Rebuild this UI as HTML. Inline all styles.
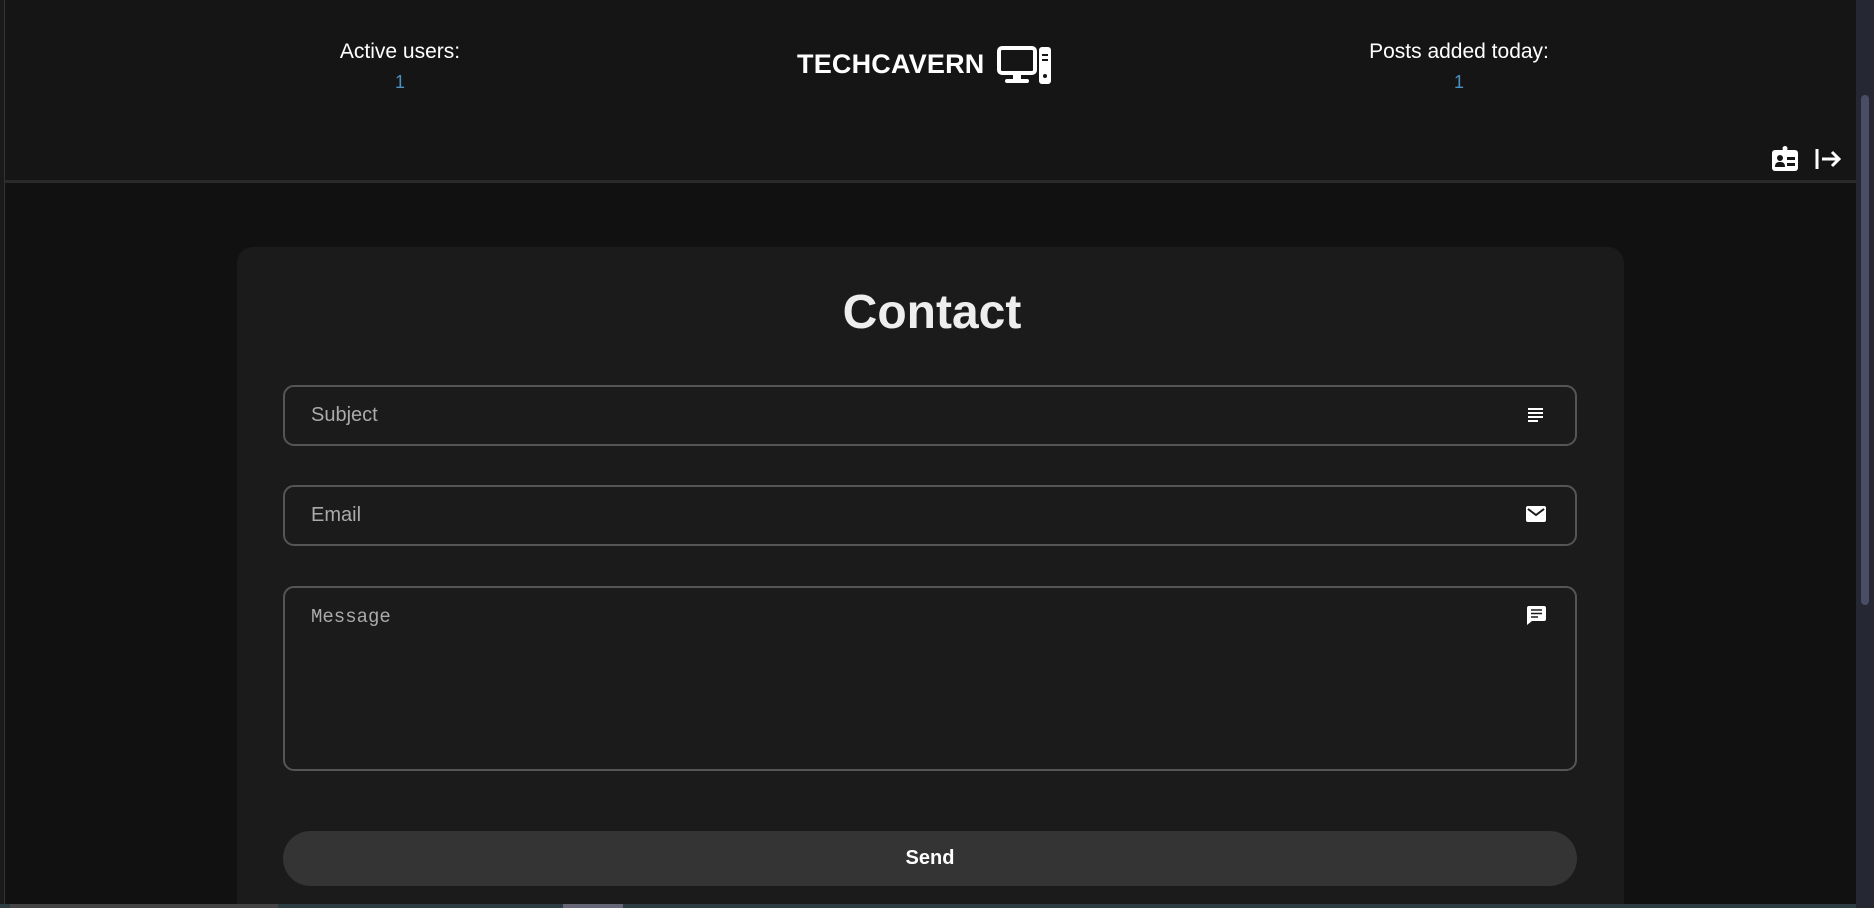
<!DOCTYPE html>
<html style="overflow:hidden;width:1874px;height:908px"><head><style>
*{margin:0;padding:0;box-sizing:border-box}
body{width:1874px;height:908px;background:#111;overflow:hidden;font-family:"Liberation Sans",sans-serif;position:relative;color:#fff}
.hdr{position:absolute;left:5px;top:0;width:1851px;height:183px;background:#151515;border-bottom:3px solid #2a2a2a}
.stat{position:absolute;top:40px;text-align:center;font-size:21px;width:300px}
.stat b{display:block;font-weight:normal;color:#4a90c0;font-size:18px;margin-top:8px}
.logo{position:absolute;left:797px;top:49px;font-size:27px;font-weight:bold;letter-spacing:0.2px}
.card{position:absolute;left:237px;top:247px;width:1387px;height:661px;background:#1b1b1b;border-radius:16px 16px 0 0}
h1{position:absolute;left:0;width:100%;top:285px;text-align:center;font-size:48px;font-weight:bold;color:#eee;padding-right:10px}
.inp{position:absolute;left:283px;width:1294px;border:2px solid #555;border-radius:11px;color:#aaa;font-size:20px;padding-left:26px}
.btn{position:absolute;left:283px;top:831px;width:1294px;height:55px;background:#343434;border-radius:28px;text-align:center;line-height:55px;font-weight:bold;font-size:20px}
.sb{position:absolute;left:1856px;top:0;width:18px;height:908px;background:#252833}
</style></head><body>
<div style="position:absolute;left:0;top:0;width:5px;height:908px;background:#1a1a1a;border-right:1px solid #333"></div>
<div class="hdr"></div>
<div class="stat" style="left:250px">Active users:<b>1</b></div>
<div class="stat" style="left:1309px">Posts added today:<b>1</b></div>
<div class="logo">TECHCAVERN</div>
<svg style="position:absolute;left:997px;top:46px" width="56" height="40" viewBox="0 0 56 40"><rect x="2" y="2" width="36" height="25" rx="3" fill="none" stroke="#fff" stroke-width="4"/><rect x="16" y="27" width="8" height="7" fill="#fff"/><rect x="8" y="33" width="24" height="4" rx="2" fill="#fff"/><rect x="42" y="1" width="12" height="37" rx="3" fill="#fff"/><rect x="45" y="8" width="6" height="2" fill="#151515"/><rect x="45" y="13" width="6" height="2" fill="#151515"/><circle cx="48" cy="30" r="2" fill="#151515"/></svg>
<svg style="position:absolute;left:1772px;top:146px" width="26" height="25" viewBox="0 0 26 25"><rect x="0" y="4" width="26" height="21" rx="3" fill="#fff"/><circle cx="13" cy="2.5" r="2.5" fill="#fff"/><circle cx="8" cy="12" r="3" fill="#151515"/><path d="M3 21c0-4 2-5 5-5s5 1 5 5z" fill="#151515"/><rect x="15" y="11" width="8" height="3" fill="#151515"/><rect x="15" y="17" width="8" height="3" fill="#151515"/></svg>
<svg style="position:absolute;left:1814px;top:148px" width="28" height="22" viewBox="0 0 28 22"><path d="M3 1v20M8 11h17M18 4l7 7-7 7" stroke="#fff" stroke-width="3" fill="none"/></svg>
<div class="card"></div>
<h1>Contact</h1>
<div class="inp" style="top:385px;height:61px;line-height:57px">Subject</div>
<svg style="position:absolute;left:1528px;top:408px" width="16" height="14"><path d="M0 1h15M0 5h15M0 9h15M0 13h10" stroke="#fff" stroke-width="2"/></svg>
<div class="inp" style="top:485px;height:61px;line-height:57px">Email</div>
<svg style="position:absolute;left:1526px;top:506px" width="20" height="16"><rect width="20" height="16" rx="2" fill="#fff"/><path d="M2 3l8 6 8-6" stroke="#1b1b1b" stroke-width="2" fill="none"/></svg>
<div class="inp" style="top:586px;height:185px;padding-top:18px;font-family:'Liberation Mono',monospace;font-size:19px">Message</div>
<svg style="position:absolute;left:1527px;top:606px" width="19" height="19"><path d="M2 0h15a2 2 0 012 2v11a2 2 0 01-2 2H5l-5 4V2a2 2 0 012-2z" fill="#fff"/><path d="M4 4h11M4 7.5h11M4 11h7" stroke="#1b1b1b" stroke-width="1.6"/></svg>
<div class="btn">Send</div>
<div class="sb"><div style="position:absolute;left:5px;top:95px;width:8px;height:510px;background:#4a4d66;border-radius:4px"></div></div>
<div style="position:absolute;left:0;top:904px;width:1856px;height:4px;background:#2c3c42"><div style="position:absolute;left:10px;width:268px;height:4px;background:#444"></div><div style="position:absolute;left:563px;width:60px;height:4px;background:#667"></div></div>
</body></html>
